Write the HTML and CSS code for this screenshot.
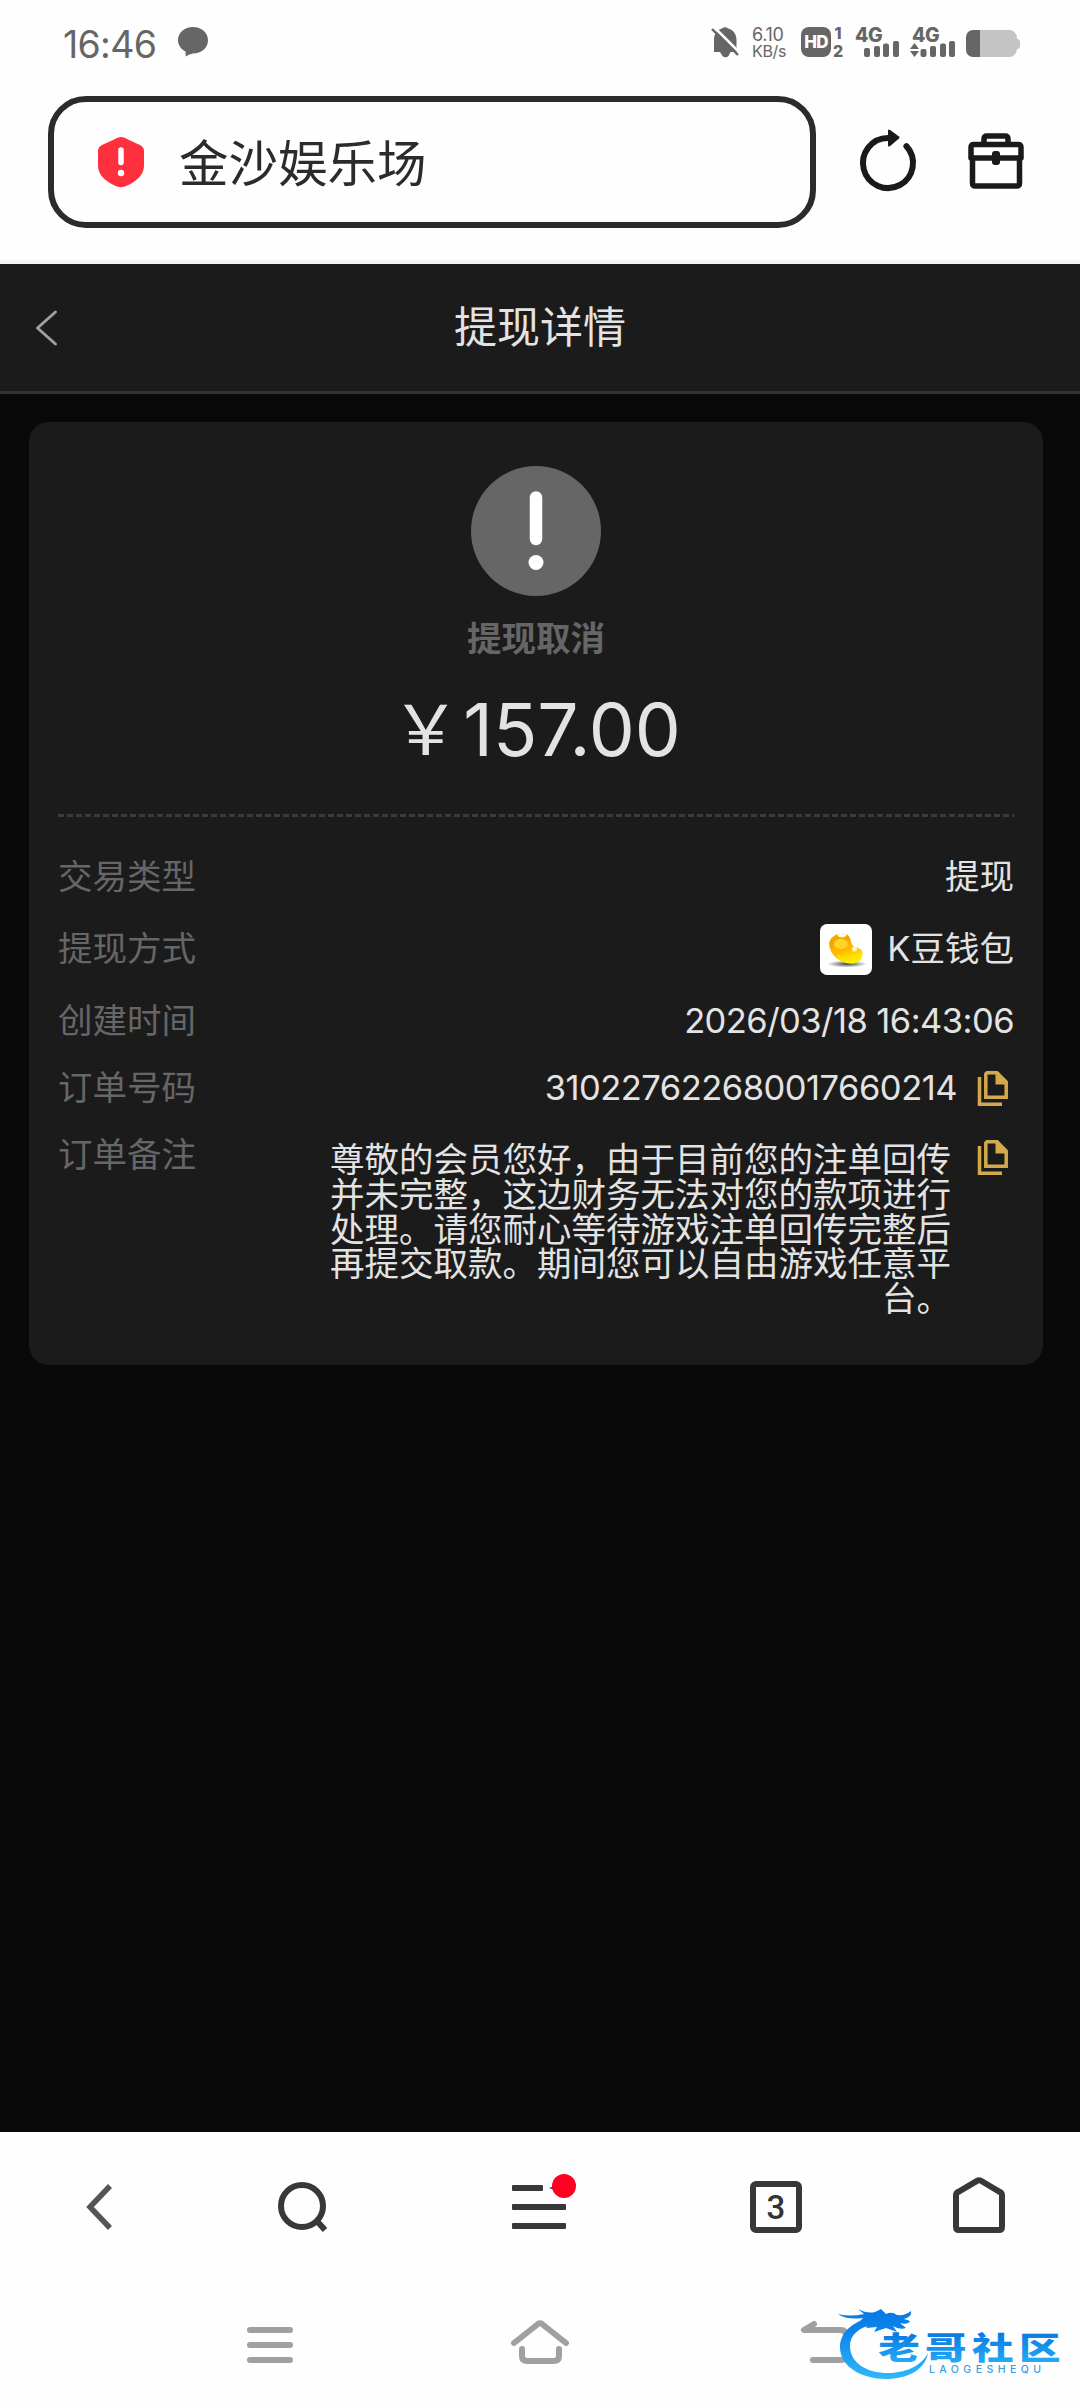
FILE: index.html
```html
<!DOCTYPE html>
<html lang="zh-CN">
<head>
<meta charset="utf-8">
<title>提现详情</title>
<link rel="stylesheet" href="styles.css">
</head>
<body>
<div class="screen">
  <header class="status">
    <span class="clock">16:46</span>
    <svg class="bubble" width="30" height="30" viewBox="0 0 30 30"><path d="M15 0C23.500 0 30 5.800 30 13.200S23.500 26.500 15 26.500Q11.500 27.200 7.800 29.500L7.500 24.500C3 22 0 18 0 13.200 0 5.800 6.500 0 15 0Z"/></svg>
    <div class="status-right">
      <svg class="bell" width="29" height="32" viewBox="0 0 29 32"><path d="M3 25V13C3 5.500 7 2.500 11 1.500a4 4 0 0 1 6 0C22 2.500 25.500 7 25.500 13v9l2 3H19.500L17.500 29a4 4 0 0 1-6 0L9 25H1Z"/><path class="slash-gap" d="M3 0L30 27"/><path class="slash" d="M1 2L27 28"/></svg>
      <div class="speed"><span class="rate">6.10</span><span class="unit">KB/s</span></div>
      <span class="hd">HD</span>
      <div class="sims"><span>1</span><span>2</span></div>
      <div class="signal"><span>4G</span>
        <svg width="35" height="16" viewBox="0 0 35 16"><rect y="7" width="6" height="9" rx="2"/><rect x="10" y="5" width="6" height="11" rx="2"/><rect x="19" y="2.500" width="6" height="13.500" rx="2"/><rect x="29" width="6" height="16" rx="2"/></svg>
      </div>
      <div class="signal second"><span>4G</span>
        <svg width="45" height="16" viewBox="0 0 45 16"><path d="M4.500 2L9 8H0ZM4.500 16L0 10H9Z"/><rect x="10.500" y="8" width="6" height="8" rx="2"/><rect x="20" y="5" width="6" height="11" rx="2"/><rect x="30" y="2.500" width="6" height="13.500" rx="2"/><rect x="39" width="6" height="16" rx="2"/></svg>
      </div>
      <svg class="battery" width="54" height="27" viewBox="0 0 54 27"><path class="rest" d="M14 0H43a8 8 0 0 1 8 8v1q3 0 3 3v4q0 3-3 3a8 8 0 0 1-8 8H14Z"/><path d="M14 0V27H7a7 7 0 0 1-7-7V7A7 7 0 0 1 7 0Z"/></svg>
    </div>
  </header>

  <div class="browser-bar">
    <div class="address">
      <svg width="46" height="50" viewBox="0 0 46 50"><path class="shield" d="M23 0Q26 0 31 3L42 8Q46 10 46 14V29C46 39 36 46 27 49.500Q23 51 19 49.500C10 46 0 39 0 29V14Q0 10 4 8L15 3Q20 0 23 0Z"/><path class="mark" d="M23 13V25.500"/><circle class="mark-dot" cx="23" cy="36" r="3.200"/></svg>
      <span class="site">金沙娱乐场</span>
    </div>
    <svg class="reload" width="60" height="64" viewBox="0 0 60 64"><path class="line" d="M32 11.100L30 11A25 25 0 1 0 48.400 19.100"/><path d="M30 4q0-2.500 2.200-1L41 9.500q1 1 0 2l-8.800 7.500q-2.200 1.500-2.200-1Z"/></svg>
    <svg class="toolbox" width="56" height="56" viewBox="0 0 56 56"><path class="line" d="M16 9V6q0-3 3-3h18q3 0 3 3v3M6 11.500H50q3 0 3 3V25H3V14.500q0-3 3-3ZM4.500 25V50q0 3 3 3h41q3 0 3-3V25"/><rect x="24" y="18" width="8" height="14" rx="3"/></svg>
  </div>

  <main class="page">
    <div class="page-head">
      <svg class="page-back" width="23" height="36" viewBox="0 0 23 36"><path d="M20.500 2L2.500 18L20.500 34"/></svg>
      <h1>提现详情</h1>
    </div>
    <section class="card">
      <svg class="state-icon" width="130" height="130" viewBox="0 0 130 130"><circle class="disc" cx="65" cy="65" r="65"/><path d="M65 31.500V73"/><circle class="dot" cx="65" cy="96.500" r="7.500"/></svg>
      <p class="state">提现取消</p>
      <p class="amount"><span class="yen">￥</span><span>157.00</span></p>
      <svg class="divider" width="956" height="3" viewBox="0 0 956 3"><path d="M0 1.500H956"/></svg>
      <dl class="rows">
        <div class="row"><dt>交易类型</dt><dd>提现</dd></div>
        <div class="row"><dt>提现方式</dt><dd class="wallet">
          <svg width="52" height="51" viewBox="0 0 52 51">
            <defs><linearGradient id="bean" x1="0" y1="0" x2=".35" y2="1"><stop offset="0" stop-color="#f0b400"/><stop offset=".3" stop-color="#f3a500"/><stop offset=".65" stop-color="#ffba00"/><stop offset="1" stop-color="#fff000"/></linearGradient><radialGradient id="shade"><stop offset="0" stop-color="#444"/><stop offset="1" stop-color="#fff"/></radialGradient></defs>
            <rect width="52" height="51" rx="7" fill="#fff"/>
            <ellipse cx="27" cy="40" rx="20" ry="3.500" fill="url(#shade)"/>
            <path fill="url(#bean)" d="M14 12C18 8 28 8 30 14C31 18 32 22 35 23C40 24 43 26 42.500 31C42 38 35 40 29 39.500C20 38 13 33 10.500 26C8 20 9 15 14 12Z"/>
            <ellipse cx="21" cy="20" rx="7" ry="5" fill="#ffd52a"/>
            <path d="M17 10Q18 13.500 22 13.500T26.500 10Q22 8 17 10Z" fill="#fffbe0"/>
            <circle cx="34.500" cy="25" r="2.500" fill="#fff6b0"/>
            <path d="M18 32Q28 39 40 33" fill="none" stroke="#ffe400" stroke-width="2"/>
          </svg><span>K豆钱包</span></dd></div>
        <div class="row"><dt>创建时间</dt><dd class="date">2026/03/18 16:43:06</dd></div>
        <div class="row order"><dt>订单号码</dt><dd><span class="number">310227622680017660214</span>
          <svg class="copy" width="30" height="35" viewBox="0 0 30 35"><path class="copy-line" d="M1.500 6V33.200H24M9 1.800H19L28.200 11V26.200H7.800V3Z"/><path d="M18 0L30 12V13.500H17.500V0Z"/></svg></dd></div>
        <div class="row note"><dt>订单备注</dt><dd><p>尊敬的会员您好，由于目前您的注单回传并未完整，这边财务无法对您的款项进行处理。请您耐心等待游戏注单回传完整后再提交取款。期间您可以自由游戏任意平台。</p>
          <svg class="copy" width="30" height="35" viewBox="0 0 30 35"><path class="copy-line" d="M1.500 6V33.200H24M9 1.800H19L28.200 11V26.200H7.800V3Z"/><path d="M18 0L30 12V13.500H17.500V0Z"/></svg></dd></div>
      </dl>
    </section>
  </main>

  <nav class="tools">
    <svg class="t-back" width="26" height="46" viewBox="0 0 26 46"><path d="M24 2L4 23L24 44"/></svg>
    <svg class="t-search" width="51" height="52" viewBox="0 0 51 52"><circle cx="24" cy="24" r="21"/><path d="M38 38L47 48"/></svg>
    <svg class="t-menu" width="64" height="54" viewBox="0 0 64 54"><g class="solid"><rect y="13" width="31" height="6" rx="1"/><path d="M37 16l4-1.500v3Z"/><rect y="32" width="54" height="6" rx="1"/><rect y="51" width="54" height="6" rx="1"/></g><circle class="badge" cx="52" cy="14" r="12"/></svg>
    <span class="tabs">3</span>
    <svg class="t-home" width="52" height="56" viewBox="0 0 52 56"><path d="M3 18.500Q3 16 5 15L24 3.800Q26 2.600 28 3.800L47 15Q49 16 49 18.500V50q0 3-3 3H6q-3 0-3-3Z"/></svg>
  </nav>
  <nav class="system">
    <svg class="s-menu" width="46" height="36" viewBox="0 0 46 36"><path d="M3 3H43M3 18H43M3 33H43"/></svg>
    <svg class="s-home" width="58" height="44" viewBox="0 0 58 44"><path d="M3 23L27 4Q29 2.500 31 4L55 23M11 29V36q0 5 5 5H43q5 0 5-5V29"/></svg>
    <svg class="s-back" width="60" height="44" viewBox="0 0 60 44"><path d="M13 4L3 10H40Q45 10 45 16V34Q45 40 40 40H12"/></svg>
  </nav>

  <svg class="watermark" width="232" height="80" viewBox="0 0 232 80">
    <defs><linearGradient id="blue" gradientUnits="userSpaceOnUse" x1="0" y1="5" x2="0" y2="76"><stop offset="0" stop-color="#0878e8"/><stop offset=".35" stop-color="#0b86ec"/><stop offset="1" stop-color="#31b9fa"/></linearGradient>
    <linearGradient id="ink" gradientUnits="userSpaceOnUse" x1="0" y1="-27" x2="0" y2="2"><stop offset="0" stop-color="#0878e0"/><stop offset="1" stop-color="#22a8f5"/></linearGradient></defs>
    <g fill="url(#blue)">
      <path d="M33 15C16 19 4 30 4 44C4 64 26 76 50 76C71 76 89 67 92 50C85 64 68 70 52 70C31 70 14 60 14 43C14 32 23 24 37 22Z"/>
      <path d="M2 11Q14 14 28 11L22 6Q31 11 39 9L45 6L50 11Q56 8 61 12Q69 13 75 8Q76 14 68 16L74 18Q72 22 64 20L70 25Q63 27 57 23L61 29L50 25L38 29L41 24L30 25L34 20L22 20L27 15Q10 17 2 11Z"/>
    </g>
    <g class="wm-title" fill="url(#ink)" transform="translate(0 56) scale(1.340 1)"><text x="31.500" y="0">老</text><text x="66.500" y="0">哥</text><text x="101.500" y="0">社</text><text x="136.500" y="0">区</text></g>
    <text class="wm-sub" x="93" y="69.500" textLength="112">LAOGESHEQU</text>
  </svg>
</div>
</body>
</html>
```
FILE: styles.css
```css
* { box-sizing: border-box; margin: 0; padding: 0; }
body { background: #fefefe; font-family: Inter, "Noto Sans CJK SC", sans-serif; }
svg { display: block; flex: none; overflow: visible; }
.screen { position: relative; width: 1080px; height: 2408px; display: flex; flex-direction: column; overflow: hidden; }

.status { height: 96px; padding: 27px 60px 0 63px; display: flex; align-items: flex-start; color: #666; fill: #666; }
.clock { width: 95px; font-size: 37.5px; line-height: 36px; letter-spacing: -.7px; white-space: nowrap; }
.bubble { margin-left: 20px; }
.status-right { margin-left: auto; display: flex; align-items: flex-start; }
.slash { stroke: #666; stroke-width: 2.4; }
.slash-gap { stroke: #fefefe; stroke-width: 2.500; }
.speed { width: 36px; margin-left: 12px; display: flex; flex-direction: column; white-space: nowrap; }
.rate { font-size: 18px; line-height: 16px; letter-spacing: -.3px; }
.unit { font-size: 16px; line-height: 16px; letter-spacing: -.3px; }
.hd { margin-left: 13px; width: 30px; height: 30px; border-radius: 8px; background: #666; color: #fefefe; font-size: 17px; line-height: 31px; font-weight: 800; text-align: center; letter-spacing: -.7px; }
.sims { width: 12px; margin-left: 1px; display: flex; flex-direction: column; align-items: center; gap: 2px; font-size: 16px; line-height: 13px; font-weight: 800; }
.sims span:last-child { padding-top: 3px; }
.signal { width: 45px; height: 30px; margin-left: 11px; display: flex; flex-direction: column; }
.signal span { height: 14px; font-size: 19.5px; line-height: 16px; font-weight: 800; letter-spacing: -.5px; }
.signal svg { margin-left: 9px; }
.second { margin-left: 10px; }
.second span { padding-left: 2px; }
.second svg { margin-left: 0; }
.battery { margin: 3px 0 0 11px; }
.battery .rest { fill: #c4c4c4; }

.browser-bar { height: 168px; padding-left: 48px; display: flex; align-items: flex-start; border-bottom: 4px solid #f3f3f3; }
.address { width: 768px; height: 132px; border: 6px solid #2b2b2b; border-radius: 38px; padding-left: 44px; display: flex; align-items: center; gap: 35px; color: #2b2b2b; font-size: 49.500px; line-height: 60px; }
.site { padding-top: 3px; }
.shield { fill: #ff303d; }
.mark { stroke: #fff; stroke-width: 5.500; stroke-linecap: round; }
.mark-dot { fill: #fff; }
.reload, .toolbox { fill: #1a1a1a; }
.reload .line, .toolbox .line { fill: none; stroke: #1a1a1a; stroke-width: 6; stroke-linecap: round; stroke-linejoin: round; }
.toolbox .line { stroke-width: 5.500; }
.reload { margin: 31px 0 0 42px; }
.toolbox { margin: 37px 0 0 50px; }

.page { height: 1868px; background: #090909; }
.page-head { height: 130px; border-bottom: 3px solid #333; background: #1b1b1b; display: grid; grid-template-columns: 58px 1fr 58px; align-items: center; }
.page-back { margin-left: 35px; fill: none; stroke: #a0a0a0; stroke-width: 3; stroke-linecap: round; stroke-linejoin: round; }
h1 { padding-bottom: 2px; font-size: 43px; line-height: 60px; font-weight: 400; text-align: center; color: #e3e3e3; }
.card { width: 1014px; height: 943px; margin: 28px 0 0 29px; padding: 44px 29px 0; border-radius: 20px; background: #1b1b1b; color: #e3e3e3; display: flex; flex-direction: column; align-items: center; }
.state-icon .disc { fill: #666; }
.state-icon path { stroke: #fff; stroke-width: 12.500; stroke-linecap: round; }
.state-icon .dot { fill: #fff; }
.state { margin-top: 23px; font-size: 34.500px; line-height: 40px; font-weight: 700; color: #666; }
.amount { height: 88px; margin-top: 27px; display: flex; font-size: 73px; line-height: 88px; }
.yen { width: 72px; margin-top: -5px; font-family: "Noto Sans CJK SC", sans-serif; font-size: 69px; }
.divider { margin-top: 40px; }
.divider path { stroke: #3a3a3a; stroke-width: 3; stroke-dasharray: 6 3; }
.rows { width: 956px; margin-top: 24px; font-size: 34.500px; }
.row { height: 72px; display: flex; justify-content: space-between; align-items: center; line-height: 50px; }
dt { color: #666; }
.wallet { display: flex; align-items: center; gap: 15px; }
.date { letter-spacing: -.55px; }
.order { height: 62px; }
.order dd { display: flex; align-items: center; gap: 21px; }
.number { letter-spacing: -.5px; }
.copy { margin-right: 6px; fill: #d4a94b; }
.copy-line { fill: none; stroke: #d4a94b; stroke-width: 3.500; }
.note { height: auto; margin-top: 11px; align-items: flex-start; }
.note dd { display: flex; gap: 27px; }
.note p { width: 622px; padding-top: 13px; text-align: right; line-height: 34.800px; text-spacing-trim: space-all; }
.note .copy { margin-top: 10px; }

.tools { height: 148px; padding-left: 86px; display: flex; align-items: flex-start; fill: none; stroke: #383838; stroke-width: 6; }
.t-back { margin-top: 52px; stroke: #555; stroke-width: 5.500; }
.t-search { margin: 50px 0 0 166px; }
.t-menu { margin: 40px 0 0 183px; }
.t-menu .solid { fill: #383838; stroke: none; }
.badge { fill: #ff0022; stroke: none; }
.tabs { width: 52px; height: 52px; margin: 49px 0 0 174px; border: 6px solid #383838; border-radius: 6px; color: #333; font: 500 33px/41px Roboto, sans-serif; text-align: center; }
.t-home { margin: 45px 0 0 151px; }
.system { height: 128px; padding-left: 247px; display: flex; align-items: flex-start; fill: none; stroke: #a0a0a0; stroke-width: 6; stroke-linecap: round; stroke-linejoin: round; }
.s-menu { margin-top: 47px; }
.s-home { margin: 40px 0 0 218px; }
.s-back { margin: 40px 0 0 232px; }

/* Site mark floating over the system navigation */
.watermark { position: absolute; left: 836px; top: 2303px; }
.wm-title { font: 900 31px "Noto Sans CJK SC", sans-serif; }
.wm-sub { font: 500 10.500px Inter, sans-serif; fill: #3c9ee4; }
```
